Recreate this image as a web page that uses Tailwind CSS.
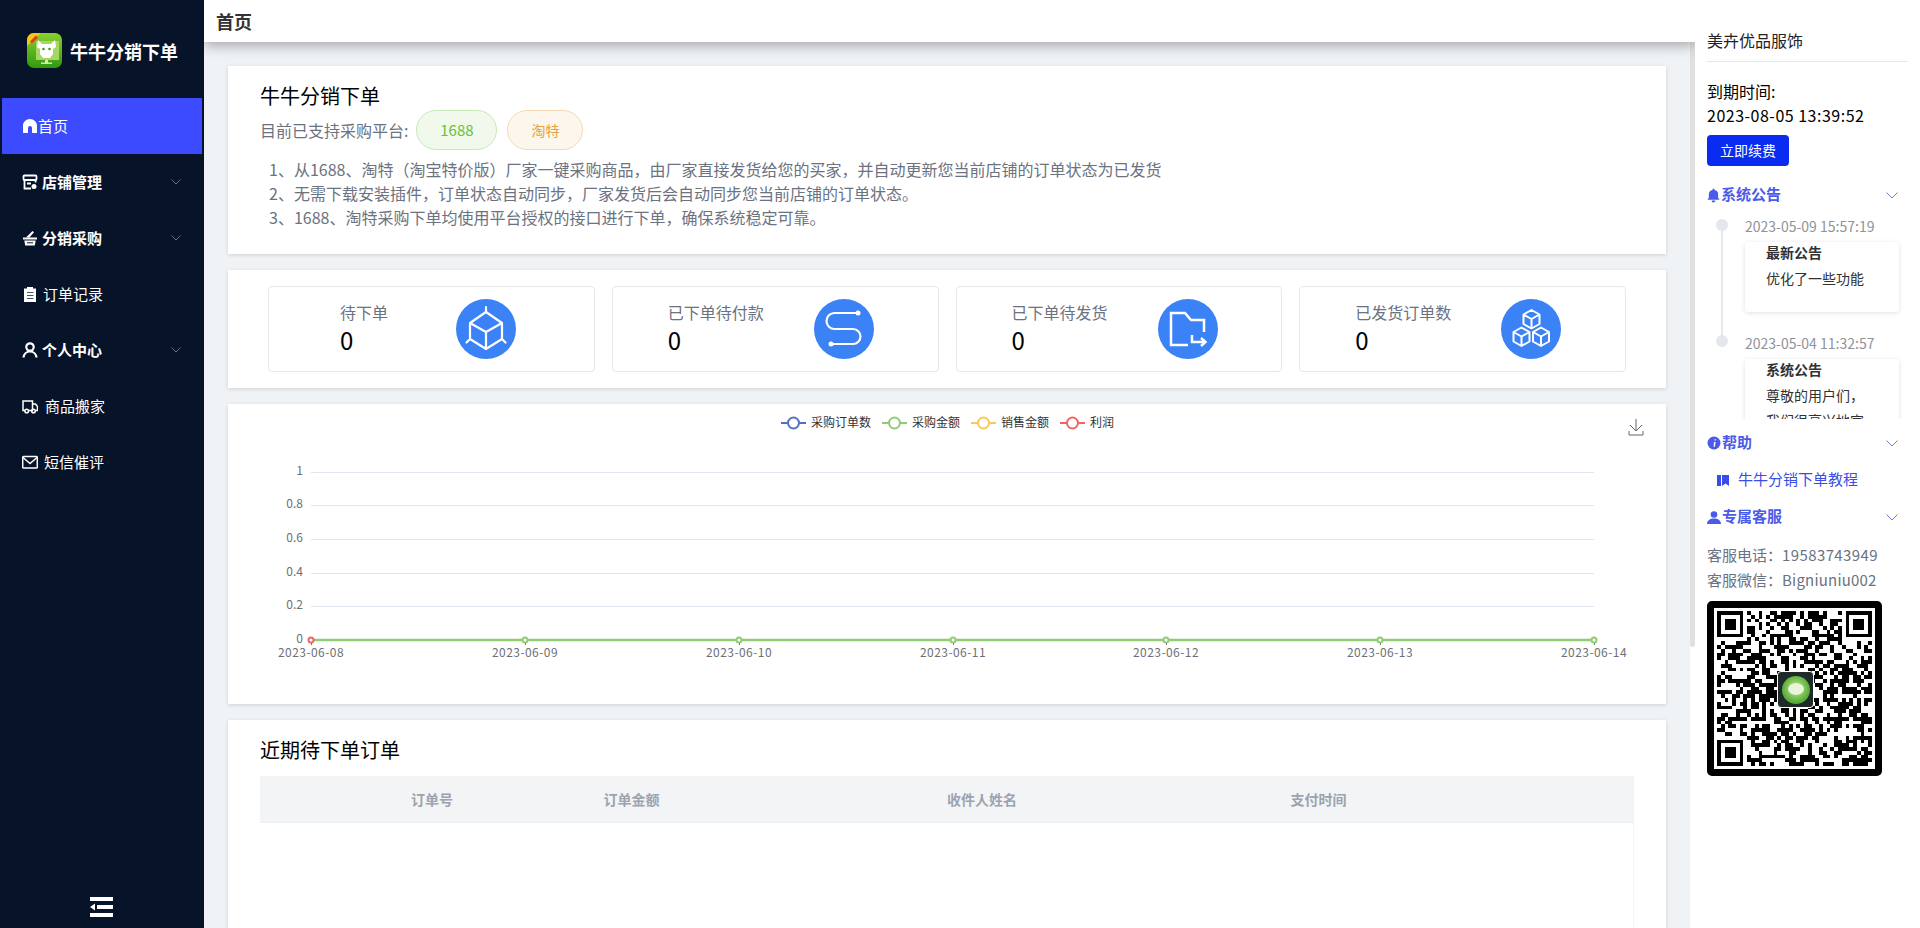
<!DOCTYPE html>
<html lang="zh-CN">
<head>
  <meta charset="UTF-8" />
  <meta name="viewport" content="width=device-width, initial-scale=1" />
  <title>首页 - 牛牛分销下单</title>
  <script src="https://cdn.jsdelivr.net/npm/@tailwindcss/browser@4"></script>
</head>
<body class="h-screen overflow-hidden bg-white [font-family:'Noto_Sans_CJK_SC','Noto_Sans',sans-serif]">
<div class="flex h-[928px] overflow-hidden">

  <!-- Sidebar -->
  <aside class="w-[204px] shrink-0 bg-[#071328] flex flex-col text-white z-20">
    <div class="h-[98px] flex items-start pl-[27px] pt-[33px]">
      <svg width="35" height="35" viewBox="0 0 35 35" class="shrink-0">
        <defs><linearGradient id="lg" x1="0" y1="0" x2="0" y2="1"><stop offset="0" stop-color="#8ccf2e"/><stop offset="1" stop-color="#2f9a12"/></linearGradient></defs>
        <rect width="35" height="35" rx="7" fill="url(#lg)"/>
        <rect x="9" y="8" width="23" height="19" fill="#a6d765"/>
        <path d="M0 13V7a7 7 0 0 1 7-7h7Z" fill="#f5c518"/>
        <path d="M4 9.500l6-6" stroke="#d8421c" stroke-width="3"/>
        <path d="M11 7l4 4h9l4-4 1 7-3 2v5l-3 4h-7l-3-4v-5l-3-2Z" fill="#fff"/>
        <circle cx="16.500" cy="16" r="1.300" fill="#4a9a1a"/><circle cx="22.500" cy="16" r="1.300" fill="#4a9a1a"/>
        <path d="M18 27h3v2.500h4V31H14v-1.500h4Z" fill="#d8ef9f"/>
      </svg>
      <span class="ml-2 text-[18px] font-bold leading-[36px]">牛牛分销下单</span>
    </div>
    <nav class="px-[2px] text-[15px]">
      <a class="h-14 flex items-center pl-5 bg-[#3c4bff]">
        <svg width="16" height="16" viewBox="0 0 16 16" fill="#fff"><path d="M8 1C4.200 1 1 4 1 7.500V15h5v-5a2 2 0 0 1 4 0v5h5V7.500C15 4 11.800 1 8 1Z"/></svg>
        <span>首页</span>
      </a>
      <a class="h-14 flex items-center pl-5 pr-[21px] font-bold">
        <svg width="16" height="16" viewBox="0 0 16 16" fill="none" stroke="#fff" stroke-width="1.800"><rect x="1.500" y="1.500" width="13" height="4.500" rx="1"/><path d="M2.500 6v8.500H9M13.500 6v2.500M5 9.500h4"/><circle cx="12" cy="12.500" r="2.500" fill="#fff" stroke="none"/></svg>
        <span class="ml-1">店铺管理</span>
        <svg class="ml-auto" width="10" height="6" viewBox="0 0 10 6" fill="none" stroke="#6b7280"><path d="M.5.500 5 5 9.500.500"/></svg>
      </a>
      <a class="h-14 flex items-center pl-5 pr-[21px] font-bold">
        <svg width="16" height="16" viewBox="0 0 16 16" fill="#fff"><path d="M1 7.500h14v2H1ZM2.300 10.500h11.400l-.9 5H3.200Z"/><path d="M4 7.500 10.500 1l1.500 1.200-4.500 5.300Z"/><path d="M5 12.800h6" stroke="#071328"/></svg>
        <span class="ml-1">分销采购</span>
        <svg class="ml-auto" width="10" height="6" viewBox="0 0 10 6" fill="none" stroke="#6b7280"><path d="M.5.500 5 5 9.500.500"/></svg>
      </a>
      <a class="h-14 flex items-center pl-5">
        <svg width="16" height="16" viewBox="0 0 16 16"><path d="M2 2.500h3V1h6v1.500h3V16H2Z" fill="#fff"/><path d="M5 6.500h6.500M5 9.500h6.500M5 12.500h6.500" stroke="#4b5563" stroke-width="1.200"/></svg>
        <span class="ml-[5px]">订单记录</span>
      </a>
      <a class="h-14 flex items-center pl-5 pr-[21px] font-bold">
        <svg width="16" height="16" viewBox="0 0 16 16" fill="none" stroke="#fff" stroke-width="2.200"><circle cx="8" cy="5" r="3.700"/><path d="M1.500 15.500c.4-3.500 3-6 6.500-6s6.100 2.500 6.500 6"/></svg>
        <span class="ml-1">个人中心</span>
        <svg class="ml-auto" width="10" height="6" viewBox="0 0 10 6" fill="none" stroke="#6b7280"><path d="M.5.500 5 5 9.500.500"/></svg>
      </a>
      <a class="h-14 flex items-center pl-5">
        <svg width="16" height="16" viewBox="0 0 16 16" fill="none" stroke="#fff" stroke-width="1.500"><path d="M3 12.500H1V3h9.500v9.500H6.500M10.500 6h3l2 2.500v4h-1.500"/><circle cx="4.700" cy="13" r="1.800"/><circle cx="11.500" cy="13" r="1.800"/></svg>
        <span class="ml-[7px]">商品搬家</span>
      </a>
      <a class="h-14 flex items-center pl-5">
        <svg width="16" height="16" viewBox="0 0 16 16" fill="none" stroke="#fff" stroke-width="1.500"><rect x=".7" y="2.500" width="14.600" height="11.500" rx="1"/><path d="M1 3.500 8 9.500l7-6"/></svg>
        <span class="ml-[6px]">短信催评</span>
      </a>
    </nav>
    <div class="mt-auto mb-[11px] flex justify-center">
      <svg width="23" height="20" viewBox="0 0 23 20" fill="#fff" class="ml-[-2px]"><path d="M0 0h23v4H0ZM0 16h23v4H0ZM7 8h16v4H7ZM0 10l5-3.500v7Z"/></svg>
    </div>
  </aside>

  <!-- Main -->
  <div class="w-[1491px] shrink-0 flex flex-col">
    <header class="h-[42px] shrink-0 bg-white pl-3 flex items-center text-[18px] font-bold text-[#333] relative z-10 shadow-[0_4px_12px_rgba(0,0,0,0.3)]">首页</header>
    <div class="flex-1 flex overflow-hidden">
      <main class="w-[1486px] shrink-0 bg-[#f0f3f6] pl-6 pt-6 flex flex-col gap-4">

        <section class="w-[1438px] h-[188px] shrink-0 bg-white shadow-[0_1px_4px_rgba(0,0,0,0.14)] pl-8 pt-4">
          <h2 class="text-[20px] leading-[28px] text-black">牛牛分销下单</h2>
          <div class="flex items-center h-10 text-[16px] text-[#6b7280]">
            <span>目前已支持采购平台:</span>
            <span class="ml-2 w-[81px] h-10 rounded-[20px] border border-[#c8e9b8] bg-[#f0f9eb] text-[#67c23a] text-[15px] flex items-center justify-center">1688</span>
            <span class="ml-[10px] w-[76px] h-10 rounded-[20px] border border-[#f5dab1] bg-[#fdf6ec] text-[#e6a23c] text-[14px] flex items-center justify-center">淘特</span>
          </div>
          <ol class="mt-[7px] pl-[9px] text-[16px] leading-6 text-[#6b7280]">
            <li>1、从1688、淘特（淘宝特价版）厂家一键采购商品，由厂家直接发货给您的买家，并自动更新您当前店铺的订单状态为已发货</li>
            <li>2、无需下载安装插件，订单状态自动同步，厂家发货后会自动同步您当前店铺的订单状态。</li>
            <li>3、1688、淘特采购下单均使用平台授权的接口进行下单，确保系统稳定可靠。</li>
          </ol>
        </section>

        <section class="w-[1438px] h-[118px] shrink-0 bg-white shadow-[0_1px_4px_rgba(0,0,0,0.14)] px-10 py-4 grid grid-cols-4 gap-[17px]">
          <div class="h-[86px] rounded border border-[#e5e7eb] flex items-center pl-[71px] gap-[68px]">
            <div class="w-12 -mt-[3px]">
              <p class="text-[16px] leading-6 text-[#6b7280] whitespace-nowrap">待下单</p>
              <p class="text-[24px] leading-8 text-black">0</p>
            </div>
            <div class="w-[60px] h-[60px] rounded-full bg-[#3b82f6] flex items-center justify-center">
              <svg width="60" height="60" viewBox="0 0 60 60" fill="none" stroke="#fff" stroke-width="2.200" stroke-linejoin="round" stroke-linecap="round"><path d="M30 13 46 24V40L30 50 14 40V24ZM14 24 30 33 46 24M30 33V50M30 8V13M10.500 43.500 14 40M49.500 43.500 46 40"/></svg>
            </div>
          </div>
          <div class="h-[86px] rounded border border-[#e5e7eb] flex items-center pl-[55px] gap-[50px]">
            <div class="w-24 -mt-[3px]">
              <p class="text-[16px] leading-6 text-[#6b7280] whitespace-nowrap">已下单待付款</p>
              <p class="text-[24px] leading-8 text-black">0</p>
            </div>
            <div class="w-[60px] h-[60px] rounded-full bg-[#3b82f6] flex items-center justify-center">
              <svg width="60" height="60" viewBox="0 0 60 60" fill="none" stroke="#fff" stroke-width="2.200"><path d="M44 14H20.500a8 8 0 0 0 0 16H39a7.500 7.500 0 0 1 0 15H17"/><circle cx="44" cy="14" r="2.500" fill="#fff" stroke="none"/><circle cx="17" cy="45" r="2.500" fill="#fff" stroke="none"/></svg>
            </div>
          </div>
          <div class="h-[86px] rounded border border-[#e5e7eb] flex items-center pl-[55px] gap-[50px]">
            <div class="w-24 -mt-[3px]">
              <p class="text-[16px] leading-6 text-[#6b7280] whitespace-nowrap">已下单待发货</p>
              <p class="text-[24px] leading-8 text-black">0</p>
            </div>
            <div class="w-[60px] h-[60px] rounded-full bg-[#3b82f6] flex items-center justify-center">
              <svg width="60" height="60" viewBox="0 0 60 60" fill="none" stroke="#fff" stroke-width="2.500"><path d="M30 46H13V14H27L33 21H46V33M34 36V43H47M43 39 47.500 43 43 47"/></svg>
            </div>
          </div>
          <div class="h-[86px] rounded border border-[#e5e7eb] flex items-center pl-[55px] gap-[50px]">
            <div class="w-24 -mt-[3px]">
              <p class="text-[16px] leading-6 text-[#6b7280] whitespace-nowrap">已发货订单数</p>
              <p class="text-[24px] leading-8 text-black">0</p>
            </div>
            <div class="w-[60px] h-[60px] rounded-full bg-[#3b82f6] flex items-center justify-center">
              <svg width="60" height="60" viewBox="0 0 60 60" fill="none" stroke="#fff" stroke-width="2" stroke-linejoin="round">
                <path d="M30.500 11 38.500 15.500V25L30.500 29.500 22.500 25V15.500ZM22.500 15.500 30.500 20 38.500 15.500M30.500 20V29.500"/>
                <path d="M20.500 28.500 28.500 33V42.500L20.500 47 12.500 42.500V33ZM12.500 33 20.500 37.500 28.500 33M20.500 37.500V47"/>
                <path d="M40 28.500 48 33V42.500L40 47 32 42.500V33ZM32 33 40 37.500 48 33M40 37.500V47"/>
              </svg>
            </div>
          </div>
        </section>

        <!-- Chart -->
        <section class="w-[1438px] h-[300px] shrink-0 bg-white shadow-[0_1px_4px_rgba(0,0,0,0.14)]">
          <svg width="1438" height="300" viewBox="0 0 1438 300" font-size="12">
            <g stroke="#e0e6f1" fill="none">
              <path d="M83 68.500H1366M83 101.500H1366M83 135.500H1366M83 169.500H1366M83 202.500H1366"/>
            </g>
            <g fill="#6e7079" text-anchor="end">
              <text x="75" y="71">1</text><text x="75" y="104">0.8</text><text x="75" y="138">0.6</text><text x="75" y="172">0.4</text><text x="75" y="205">0.2</text><text x="75" y="239">0</text>
            </g>
            <path d="M83.500 236V241M297.500 236V241M511.500 236V241M725.500 236V241M938.500 236V241M1152.500 236V241M1366.500 236V241" stroke="#6e7079"/>
            <path d="M83 236H1366" stroke="#91cc75" stroke-width="2.500"/>
            <g fill="#fff" stroke="#91cc75" stroke-width="2">
              <circle cx="297" cy="236" r="2.500"/><circle cx="511" cy="236" r="2.500"/><circle cx="725" cy="236" r="2.500"/><circle cx="938" cy="236" r="2.500"/><circle cx="1152" cy="236" r="2.500"/><circle cx="1366" cy="236" r="2.500"/>
            </g>
            <circle cx="83" cy="236" r="2.500" fill="#fff" stroke="#ee6666" stroke-width="2"/>
            <g fill="#6e7079" text-anchor="middle" letter-spacing=".45">
              <text x="83" y="253">2023-06-08</text><text x="297" y="253">2023-06-09</text><text x="511" y="253">2023-06-10</text><text x="725" y="253">2023-06-11</text><text x="938" y="253">2023-06-12</text><text x="1152" y="253">2023-06-13</text><text x="1366" y="253">2023-06-14</text>
            </g>
            <g fill="#fff" stroke-width="2">
              <path d="M553 19H578" stroke="#5470c6"/><circle cx="565.500" cy="19" r="5.500" stroke="#5470c6"/>
              <path d="M654 19H679" stroke="#91cc75"/><circle cx="666.500" cy="19" r="5.500" stroke="#91cc75"/>
              <path d="M743 19H768" stroke="#fac858"/><circle cx="755.500" cy="19" r="5.500" stroke="#fac858"/>
              <path d="M832 19H857" stroke="#ee6666"/><circle cx="844.500" cy="19" r="5.500" stroke="#ee6666"/>
            </g>
            <g fill="#333">
              <text x="583" y="23">采购订单数</text><text x="684" y="23">采购金额</text><text x="773" y="23">销售金额</text><text x="862" y="23">利润</text>
            </g>
            <path d="M1408 15V27M1402 21 1408 27 1414 21M1401 27V31H1415V27" fill="none" stroke="#666"/>
          </svg>
        </section>

        <!-- Orders table -->
        <section class="w-[1438px] h-[300px] shrink-0 bg-white shadow-[0_1px_4px_rgba(0,0,0,0.14)] px-8 pt-[16px]">
          <h2 class="text-[20px] leading-[28px] text-black">近期待下单订单</h2>
          <div class="mt-[12px] w-[1374px] h-[47px] bg-[#f3f4f6] border-b border-[#ebeef5] grid grid-cols-4 items-center text-[14px] font-bold text-[#9ca3af]">
            <span class="pl-[151px]">订单号</span>
            <span>订单金额</span>
            <span>收件人姓名</span>
            <span>支付时间</span>
          </div>
          <div class="w-[1374px] h-[200px] border-r border-[#f3f4f6]"></div>
        </section>
      </main>
      <div class="w-[5px] shrink-0">
        <div class="h-[605px] bg-[#e0e0e0] rounded-b-[3px]"></div>
      </div>
    </div>
  </div>

  <!-- Right panel -->
  <aside class="relative z-20 w-[225px] shrink-0 pl-3 bg-white">
    <h3 class="w-[201px] h-[62px] pt-7 text-[16px] leading-6 text-[#222] border-b border-[#e5e7eb]">美卉优品服饰</h3>
    <div class="mt-[17px] text-[16px] leading-6 text-black">
      <p>到期时间:</p>
      <p class="tracking-[0.5px]">2023-08-05 13:39:52</p>
    </div>
    <button class="mt-2 w-[82px] h-[31px] rounded bg-[#0a2bf0] text-white text-[14px]">立即续费</button>

    <div class="mt-[17px] h-6 w-[191px] flex items-center text-[15px] font-bold text-[#4a5bea]">
      <svg width="13" height="15" viewBox="0 0 14 15" fill="#4a5bea" class="mr-px"><path d="M7 0a1 1 0 0 1 1 1v.6A4.800 4.800 0 0 1 12 6.500v3.500l1.500 2H.5L2 10V6.500A4.800 4.800 0 0 1 6 1.600V1a1 1 0 0 1 1-1ZM5 13h4a2 2 0 0 1-4 0Z"/></svg>
      <span class="-mt-[2px]">系统公告</span>
      <svg class="ml-auto" width="12" height="7" viewBox="0 0 12 7" fill="none" stroke="#6f7de8"><path d="M.5.500 6 6 11.500.500"/></svg>
    </div>

    <div class="h-[212px] w-[205px] overflow-hidden text-[14px] text-[#303133]">
      <div class="relative pl-[38px] pt-[9px]">
        <span class="absolute left-[9px] top-[12px] w-3 h-3 rounded-full bg-[#e4e7ed]"></span>
        <span class="absolute left-[14px] top-[24px] w-[2px] h-[105px] bg-[#e4e7ed]"></span>
        <p class="h-5 leading-5 text-[#909399]">2023-05-09 15:57:19</p>
        <div class="mt-[6px] w-[154px] h-[70px] pl-[21px] rounded bg-white shadow-[0_1px_5px_rgba(0,0,0,0.12)]">
          <p class="font-bold leading-5">最新公告</p>
          <p class="mt-1 leading-[25px]">优化了一些功能</p>
        </div>
      </div>
      <div class="relative pl-[38px] pt-[21px]">
        <span class="absolute left-[9px] top-[23px] w-3 h-3 rounded-full bg-[#e4e7ed]"></span>
        <p class="h-5 leading-5 text-[#909399]">2023-05-04 11:32:57</p>
        <div class="mt-[6px] w-[154px] h-[120px] pl-[21px] pr-2 rounded bg-white shadow-[0_1px_5px_rgba(0,0,0,0.12)]">
          <p class="font-bold leading-5">系统公告</p>
          <p class="mt-1 leading-[25px]">尊敬的用户们，<br>我们很高兴地宣</p>
        </div>
      </div>
    </div>

    <div class="mt-3 h-6 w-[191px] flex items-center text-[15px] font-bold text-[#4a5bea]">
      <svg width="14" height="14" viewBox="0 0 14 14" class="mr-px"><circle cx="7" cy="7" r="6.500" fill="#4a5bea"/><path d="M7.500 3.200h1.400v1.400H7.500ZM7 6h1.600L7.900 10.800H6.600Z" fill="#fff"/></svg>
      <span class="-mt-[2px]">帮助</span>
      <svg class="ml-auto" width="12" height="7" viewBox="0 0 12 7" fill="none" stroke="#6f7de8"><path d="M.5.500 6 6 11.500.500"/></svg>
    </div>
    <div class="mt-[13px] h-6 flex items-center pl-[10px] text-[15px] text-[#3b4de8]">
      <svg width="12" height="11" viewBox="0 0 12 11" fill="#3b4de8"><path d="M0 0h4v11H0ZM5 0h7v11L8.500 8.500 5 11Z"/></svg>
      <span class="ml-[9px] -mt-[2px]">牛牛分销下单教程</span>
    </div>
    <div class="mt-[13px] h-6 w-[191px] flex items-center text-[15px] font-bold text-[#4a5bea]">
      <svg width="14" height="13" viewBox="0 0 14 13" fill="#4a5bea" class="mr-px"><circle cx="7" cy="3.500" r="3.300"/><path d="M0 13c0-3.500 3-5.500 7-5.500s7 2 7 5.500Z"/></svg>
      <span class="-mt-[2px]">专属客服</span>
      <svg class="ml-auto" width="12" height="7" viewBox="0 0 12 7" fill="none" stroke="#6f7de8"><path d="M.5.500 6 6 11.500.500"/></svg>
    </div>
    <div class="mt-[13px] text-[15px] leading-[25px] text-[#6b7280]">
      <p>客服电话：<span class="tracking-[0.4px]">19583743949</span></p>
      <p>客服微信：<span class="tracking-[0.2px]">Bigniuniu002</span></p>
    </div>
    <!-- QR -->
    <div class="relative mt-[9px] w-[175px] h-[175px] bg-white rounded-[5px] border-[7px] border-black">
      <svg id="qr" width="155" height="155" viewBox="0 0 41 41" shape-rendering="crispEdges" class="ml-[3px] mt-[3px]"><path id="qrp" fill="#000" d=""/></svg>
      <div class="absolute left-[63px] top-[63px] w-[37px] h-[37px] rounded-[4px] bg-[#1f2a2a] border border-white flex items-center justify-center">
        <svg width="30" height="30" viewBox="0 0 30 30">
          <defs><radialGradient id="qg" cx=".5" cy=".45" r=".6"><stop offset="0" stop-color="#c8ea9a"/><stop offset="1" stop-color="#3f9f22"/></radialGradient></defs>
          <circle cx="15" cy="15" r="14" fill="url(#qg)"/>
          <ellipse cx="15" cy="14" rx="8" ry="6" fill="#e8f5d8"/>
        </svg>
      </div>
    </div>
  </aside>
</div>

<script>
  // QR modules: fixed pattern, same every load
  const size = 41;
  let seed = 1688;
  function rnd() {
    seed = (seed * 1103515245 + 12345) & 0x7fffffff;
    return (seed >> 16) & 1;
  }
  function finder(x, y) {
    return `M${x} ${y}h7v7h-7zM${x + 1} ${y + 1}v5h5v-5zM${x + 2} ${y + 2}h3v3h-3z`;
  }
  let d = finder(0, 0) + finder(34, 0) + finder(0, 34);
  for (let y = 0; y < size; y++) {
    for (let x = 0; x < size; x++) {
      const inFinder = (x < 8 && y < 8) || (x > 32 && y < 8) || (x < 8 && y > 32);
      if (!inFinder && rnd()) d += `M${x} ${y}h1v1h-1z`;
    }
  }
  d += "M33 33h5v5h-5zM34 34v3h3v-3zM35 35h1v1h-1z";
  const qrp = document.getElementById("qrp");
  qrp.setAttribute("d", d);
  qrp.setAttribute("fill-rule", "evenodd");
</script>
</body>
</html>
